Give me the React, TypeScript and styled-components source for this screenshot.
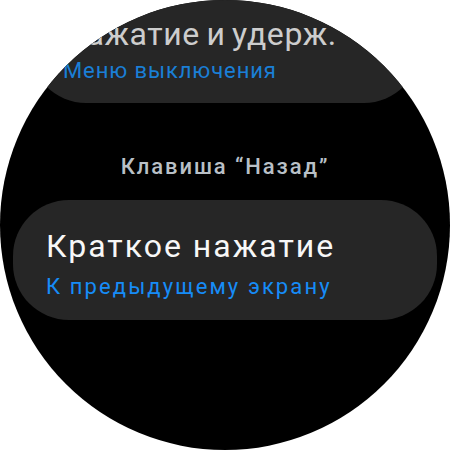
import React from "react";
import styled, { createGlobalStyle } from "styled-components";

const Global = createGlobalStyle`
  html, body {
    margin: 0;
    padding: 0;
    background: #ffffff;
  }
  body {
    font-family: Roboto, "Noto Sans", "Liberation Sans", sans-serif;
  }
`;

const Screen = styled.div`
  width: 450px;
  height: 450px;
  border-radius: 50%;
  background: #000000;
  overflow: hidden;
  display: flex;
  flex-direction: column;
`;

const Card = styled.div<{ $faded?: boolean }>`
  box-sizing: border-box;
  flex: none;
  height: 120px;
  margin: ${(p) => (p.$faded ? "-17px 30px 0" : "0 13px")};
  padding: ${(p) => (p.$faded ? "33px 33px 0" : "28px 33px 0")};
  background: #262626;
  border-radius: 56px;
  display: flex;
  flex-direction: column;
  gap: ${(p) => (p.$faded ? "5.5px" : "9.5px")};
`;

const Title = styled.div<{ $faded?: boolean }>`
  font-size: 32px;
  line-height: 36px;
  letter-spacing: ${(p) => (p.$faded ? "0.6px" : "2px")};
  word-spacing: ${(p) => (p.$faded ? "-2px" : "0")};
  color: ${(p) => (p.$faded ? "#cdcdcd" : "#f7f7f7")};
  white-space: nowrap;
`;

const Sub = styled.div<{ $faded?: boolean }>`
  font-size: 22px;
  line-height: 26px;
  letter-spacing: ${(p) => (p.$faded ? "0.9px" : "2.1px")};
  color: ${(p) => (p.$faded ? "#1a7fd6" : "#168cf7")};
  white-space: nowrap;
`;

const Header = styled.div`
  flex: none;
  margin: 50.5px 0 20.5px;
  font-size: 22px;
  line-height: 26px;
  font-weight: 500;
  letter-spacing: 1.9px;
  color: #b9c0c7;
  text-align: center;
`;

export default function App() {
  return (
    <>
      <Global />
      <Screen>
        <Card $faded>
          <Title $faded>Нажатие и удерж.</Title>
          <Sub $faded>Меню выключения</Sub>
        </Card>
        <Header>Клавиша “Назад”</Header>
        <Card>
          <Title>Краткое нажатие</Title>
          <Sub>К предыдущему экрану</Sub>
        </Card>
      </Screen>
    </>
  );
}
